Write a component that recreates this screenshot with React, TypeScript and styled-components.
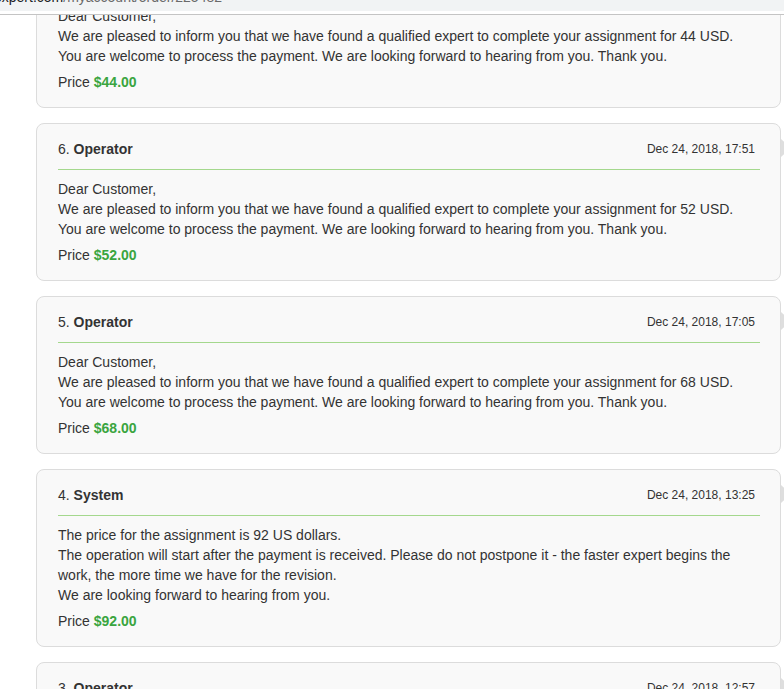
import React from "react";
import styled, { createGlobalStyle } from "styled-components";

const GlobalStyle = createGlobalStyle`
  html, body { margin: 0; padding: 0; background: #fff; }
  body { font-family: "Liberation Sans", Arial, sans-serif; }
  * { box-sizing: border-box; }
`;

const Page = styled.div`
  width: 784px;
  height: 689px;
  display: flex;
  flex-direction: column;
  overflow: hidden;
  background: #fff;
`;

const Chrome = styled.div`
  height: 15px;
  flex: none;
  display: flex;
  flex-direction: column;
  border-bottom: 1px solid #c4c4c4;
`;

const AddressBar = styled.div`
  height: 11px;
  background: #f1f3f4;
  overflow: hidden;
  padding-left: 0;
`;

const Url = styled.div`
  margin-top: -11px;
  margin-left: -6px;
  font-size: 14px;
  line-height: 16px;
  white-space: nowrap;
  color: #6a6a6a;
`;

const UrlHost = styled.span`
  color: #202124;
`;

const Viewport = styled.div`
  flex: 1;
  overflow: hidden;
`;

const List = styled.div`
  margin-top: -65px;
  padding-left: 36px;
  display: flex;
  flex-direction: column;
  gap: 15px;
`;

const Card = styled.div`
  position: relative;
  width: 745px;
  flex: none;
  background: #f9f9f9;
  border: 1px solid #dcdcdc;
  border-radius: 8px;
  padding: 15px 20px 15px 21px;
  color: #333;
  font-size: 14px;
  line-height: 20px;
`;

const Tail = styled.span`
  position: absolute;
  right: -11px;
  top: 15px;
  width: 0;
  height: 0;
  border-top: 9px solid transparent;
  border-bottom: 9px solid transparent;
  border-left: 10px solid #dedede;
`;

const Header = styled.div`
  display: flex;
  justify-content: space-between;
  align-items: center;
  padding-bottom: 10px;
  border-bottom: 1px solid #a4d88d;
`;

const Author = styled.div`
  font-size: 14px;
`;

const AuthorName = styled.b`
  font-weight: 700;
`;

const DateText = styled.div`
  font-size: 12px;
  padding-right: 5px;
`;

const Body = styled.div`
  margin-top: 9px;
`;

const Line = styled.div``;

const PriceRow = styled.div`
  margin-top: 6px;
`;

const Amount = styled.b`
  color: #3aa540;
  font-weight: 700;
`;

type Msg = {
  n: number;
  who: string;
  date: string;
  lines: string[];
  price: string;
};

const welcome = "You are welcome to process the payment. We are looking forward to hearing from you. Thank you.";
const pleased = (usd: number) =>
  `We are pleased to inform you that we have found a qualified expert to complete your assignment for ${usd} USD.`;

const messages: Msg[] = [
  { n: 7, who: "Operator", date: "Dec 24, 2018, 18:02", lines: ["Dear Customer,", pleased(44), welcome], price: "$44.00" },
  { n: 6, who: "Operator", date: "Dec 24, 2018, 17:51", lines: ["Dear Customer,", pleased(52), welcome], price: "$52.00" },
  { n: 5, who: "Operator", date: "Dec 24, 2018, 17:05", lines: ["Dear Customer,", pleased(68), welcome], price: "$68.00" },
  {
    n: 4,
    who: "System",
    date: "Dec 24, 2018, 13:25",
    lines: [
      "The price for the assignment is 92 US dollars.",
      "The operation will start after the payment is received. Please do not postpone it - the faster expert begins the work, the more time we have for the revision.",
      "We are looking forward to hearing from you.",
    ],
    price: "$92.00",
  },
  { n: 3, who: "Operator", date: "Dec 24, 2018, 12:57", lines: ["Dear Customer,", pleased(92), welcome], price: "$92.00" },
];

export default function App() {
  return (
    <>
      <GlobalStyle />
      <Page>
        <Chrome>
          <AddressBar>
            <Url>
              <UrlHost>expert.com</UrlHost>/myaccount/order/225482
            </Url>
          </AddressBar>
        </Chrome>
        <Viewport>
          <List>
            {messages.map((m) => (
              <Card key={m.n}>
                <Tail />
                <Header>
                  <Author>
                    {m.n}. <AuthorName>{m.who}</AuthorName>
                  </Author>
                  <DateText>{m.date}</DateText>
                </Header>
                <Body>
                  {m.lines.map((l, i) => (
                    <Line key={i}>{l}</Line>
                  ))}
                </Body>
                <PriceRow>
                  Price <Amount>{m.price}</Amount>
                </PriceRow>
              </Card>
            ))}
          </List>
        </Viewport>
      </Page>
    </>
  );
}
